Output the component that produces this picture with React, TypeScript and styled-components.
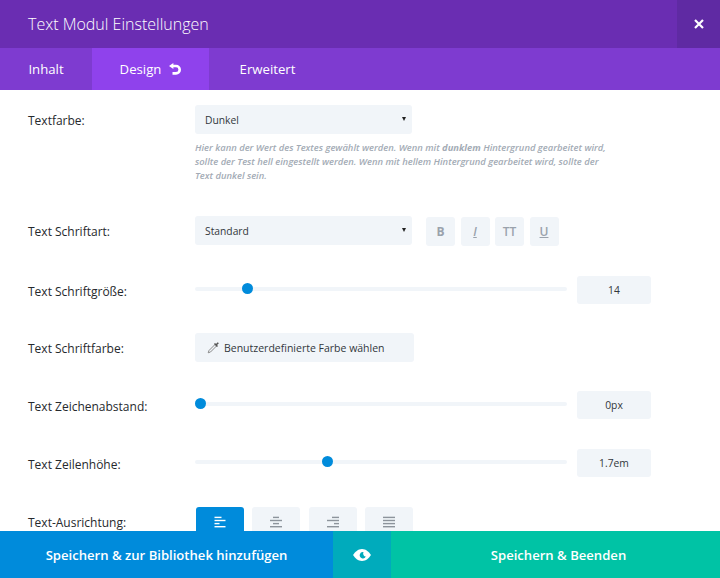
import styled, { createGlobalStyle } from "styled-components"
import { FC } from "react"

const GlobalStyle = createGlobalStyle`
  html, body { margin: 0; padding: 0; background: #fff; }
  * { box-sizing: border-box; }
  body { font-family: "Open Sans", "Liberation Sans", sans-serif; }
`

const Modal = styled.div`
  width: 720px;
  height: 578px;
  display: flex;
  flex-direction: column;
  overflow: hidden;
`

const Header = styled.header`
  height: 48px;
  flex: none;
  display: flex;
  align-items: center;
  justify-content: space-between;
  background: #6a2db2;
  padding-left: 28px;
`

const Title = styled.h1`
  margin: 0;
  font-size: 16px;
  font-weight: 300;
  color: #fff;
`

const Close = styled.div`
  width: 43px;
  height: 48px;
  display: flex;
  align-items: center;
  justify-content: center;
  background: #5f2aa3;
`

const Tabs = styled.nav`
  height: 42px;
  flex: none;
  display: flex;
  background: #7e3bd0;
`

const Tab = styled.div<{ $active?: boolean; $width: number }>`
  width: ${p => p.$width}px;
  display: flex;
  align-items: center;
  justify-content: center;
  gap: 8px;
  font-size: 13.2px;
  font-weight: 500;
  color: #fff;
  background: ${p => (p.$active ? "#8f42ec" : "transparent")};
`

const Body = styled.main`
  flex: 1;
  min-height: 0;
  overflow: hidden;
  padding: 15px 0 0 28px;
  display: flex;
  flex-direction: column;
  gap: 29px;
`

const Row = styled.section<{ $top?: number }>`
  display: grid;
  grid-template-columns: 167px 1fr;
  margin-top: ${p => p.$top || 0}px;
`

const Label = styled.label`
  height: 28px;
  font-size: 12px;
  font-weight: 500;
  line-height: 31px;
  color: #26292d;
`

const Controls = styled.div`
  display: flex;
  align-items: flex-start;
`

const Select = styled.div<{ $width: number }>`
  width: ${p => p.$width}px;
  height: 29px;
  display: flex;
  align-items: center;
  justify-content: space-between;
  padding: 0 6px 0 10px;
  border-radius: 3px;
  background: #f1f5f9;
  font-size: 10.3px;
  font-weight: 500;
  color: #32373c;
`

const Caret = styled.span`
  width: 0;
  height: 0;
  margin-top: -2px;
  border-left: 2.5px solid transparent;
  border-right: 2.5px solid transparent;
  border-top: 4px solid #222;
`

const Help = styled.p`
  width: 420px;
  margin: 7px 0 0;
  font-size: 9.4px;
  font-style: italic;
  font-weight: 600;
  line-height: 14px;
  color: #a3abb5;
  white-space: nowrap;

  strong {
    font-weight: 700;
  }
`

const StyleButtons = styled.div`
  display: flex;
  gap: 5.5px;
  margin: 1px 0 0 14px;
`

const StyleButton = styled.div<{ $italic?: boolean; $underline?: boolean; $bold?: boolean }>`
  width: 29px;
  height: 29px;
  display: flex;
  align-items: center;
  justify-content: center;
  border-radius: 3px;
  background: #f1f5f9;
  font-size: 12px;
  font-weight: ${p => (p.$bold ? 700 : 600)};
  font-style: ${p => (p.$italic ? "italic" : "normal")};
  text-decoration: ${p => (p.$underline ? "underline" : "none")};
  color: #9aa2ac;
`

const SliderTrack = styled.div`
  position: relative;
  width: 372px;
  height: 4px;
  margin-top: 11px;
  border-radius: 2px;
  background: #f1f5f9;
`

const SliderThumb = styled.span`
  position: absolute;
  top: -4px;
  width: 11px;
  height: 11px;
  border-radius: 50%;
  background: #008bdb;
`

const ValueBox = styled.div`
  width: 74px;
  height: 28px;
  margin-left: 10px;
  display: flex;
  align-items: center;
  justify-content: center;
  border-radius: 3px;
  background: #f1f5f9;
  font-size: 10.3px;
  font-weight: 500;
  color: #32373c;
`

const ColorButton = styled.div`
  width: 219px;
  height: 29px;
  display: flex;
  align-items: center;
  gap: 4px;
  padding-left: 12px;
  border-radius: 3px;
  background: #f1f5f9;
  font-size: 10.5px;
  font-weight: 500;
  color: #32373c;
`

const AlignButtons = styled.div`
  display: flex;
  gap: 8.3px;
  margin-left: 1px;
`

const AlignButton = styled.div<{ $active?: boolean }>`
  width: 48px;
  height: 29px;
  display: flex;
  align-items: center;
  justify-content: center;
  border-radius: 3px;
  background: ${p => (p.$active ? "#008bdb" : "#f1f5f9")};
  color: ${p => (p.$active ? "#fff" : "#8d949c")};
`

const Footer = styled.footer`
  height: 47px;
  flex: none;
  display: flex;
  font-size: 13.1px;
  font-weight: 600;
  color: #fff;
`

const FooterButton = styled.div<{ $bg: string; $width: number; $inset?: number }>`
  width: ${p => p.$width}px;
  display: flex;
  align-items: center;
  justify-content: center;
  padding-left: ${p => p.$inset || 0}px;
  background: ${p => p.$bg};
`

const Slider: FC<{ left: number; value: string }> = ({ left, value }) => (
  <Controls>
    <SliderTrack>
      <SliderThumb style={{ left }} />
    </SliderTrack>
    <ValueBox>{value}</ValueBox>
  </Controls>
)

const AlignIcon: FC<{ lines: number[][] }> = ({ lines }) => (
  <svg width="12" height="12" viewBox="0 0 12 12" fill="currentColor">
    {lines.map(([x, w], i) => (
      <rect key={i} x={x} y={0.7 + i * 3.1} width={w} height="1.4" />
    ))}
  </svg>
)

const ALIGNS = [
  [[0.5, 7], [0.5, 11], [0.5, 5], [0.5, 11]],
  [[3, 6], [0, 12], [3, 6], [0, 12]],
  [[5, 7], [0, 12], [7, 5], [0, 12]],
  [[0, 12], [0, 12], [0, 12], [0, 12]],
]

const App = () => {
  return (
    <Modal>
      <GlobalStyle />
      <Header>
        <Title>Text Modul Einstellungen</Title>
        <Close>
          <svg width="10" height="10" viewBox="0 0 10 10" stroke="#fff" strokeWidth="2.2">
            <path d="M1 1l8 8M9 1l-8 8" />
          </svg>
        </Close>
      </Header>
      <Tabs>
        <Tab $width={92}>Inhalt</Tab>
        <Tab $width={117} $active>
          Design
          <svg width="12" height="12" viewBox="0 0 12 12" fill="none" stroke="#fff" strokeWidth="2.6">
            <path d="M2.5 3H7a3.3 3.3 0 0 1 0 7.4H3.5" />
            <path d="M0 3L4.4 0v6z" fill="#fff" stroke="none" />
          </svg>
        </Tab>
        <Tab $width={117}>Erweitert</Tab>
      </Tabs>
      <Body>
        <Row>
          <Label>Textfarbe:</Label>
          <div>
            <Select $width={217}>
              Dunkel
              <Caret />
            </Select>
            <Help>
              Hier kann der Wert des Textes gewählt werden. Wenn mit <strong>dunklem</strong> Hintergrund gearbeitet wird,
              <br />
              sollte der Test hell eingestellt werden. Wenn mit hellem Hintergrund gearbeitet wird, sollte der
              <br />
              Text dunkel sein.
            </Help>
          </div>
        </Row>
        <Row $top={4}>
          <Label>Text Schriftart:</Label>
          <Controls>
            <Select $width={217}>
              Standard
              <Caret />
            </Select>
            <StyleButtons>
              <StyleButton $bold>B</StyleButton>
              <StyleButton $italic $underline>I</StyleButton>
              <StyleButton>TT</StyleButton>
              <StyleButton $underline>U</StyleButton>
            </StyleButtons>
          </Controls>
        </Row>
        <Row $top={1}>
          <Label>Text Schriftgröße:</Label>
          <Slider left={47} value="14" />
        </Row>
        <Row>
          <Label>Text Schriftfarbe:</Label>
          <ColorButton>
            <svg width="13" height="13" viewBox="0 0 13 13" fill="none" stroke="#8a8a8a" strokeWidth="1">
              <path d="M8 3.5L2 9.5 1.2 11.8 3.5 11l6-6" />
              <path d="M7.5 2.5l3 3M9 4l2.3-2.3" stroke="#555" strokeWidth="1.6" />
            </svg>
            Benutzerdefinierte Farbe wählen
          </ColorButton>
        </Row>
        <Row>
          <Label>Text Zeichenabstand:</Label>
          <Slider left={0} value="0px" />
        </Row>
        <Row $top={1}>
          <Label>Text Zeilenhöhe:</Label>
          <Slider left={127} value="1.7em" />
        </Row>
        <Row $top={1}>
          <Label>Text-Ausrichtung:</Label>
          <AlignButtons>
            {ALIGNS.map((lines, i) => (
              <AlignButton key={i} $active={i === 0}>
                <AlignIcon lines={lines} />
              </AlignButton>
            ))}
          </AlignButtons>
        </Row>
      </Body>
      <Footer>
        <FooterButton $bg="#008bdb" $width={333}>Speichern &amp; zur Bibliothek hinzufügen</FooterButton>
        <FooterButton $bg="#00abbc" $width={58}>
          <svg width="18" height="12" viewBox="0 0 18 12">
            <path fill="#fff" d="M9 0c4 0 7 3 9 6-2 3-5 6-9 6S2 9 0 6c2-3 5-6 9-6z" />
            <path fill="#00abbc" d="M10.5 3a3.2 3.2 0 1 0 2.3 4.6A3.2 3.2 0 0 1 10.5 3z" />
          </svg>
        </FooterButton>
        <FooterButton $bg="#00c3a5" $width={329} $inset={6}>Speichern &amp; Beenden</FooterButton>
      </Footer>
    </Modal>
  )
}

export default App
